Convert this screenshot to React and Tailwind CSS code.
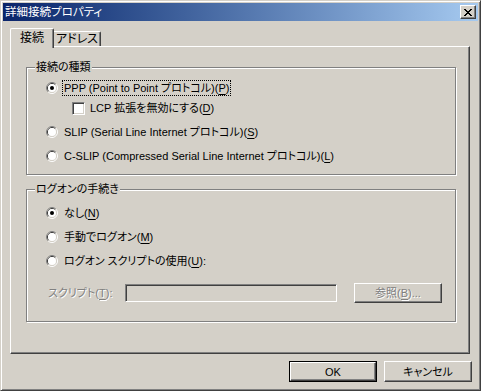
import React from "react";

const raised =
  "border border-t-white border-l-white border-r-[#404040] border-b-[#404040] shadow-[inset_-1px_-1px_#808080]";
const sunken =
  "border border-t-[#808080] border-l-[#808080] border-r-white border-b-white shadow-[inset_1px_1px_#404040,inset_-1px_-1px_#D4D0C8]";
const etched = "relative border border-[#808080] shadow-[inset_1px_1px_#fff,1px_1px_#fff]";
const disabledText = "text-[#808080] [text-shadow:1px_1px_0_#fff]";

function U({ children }) {
  return <span className="underline underline-offset-[2px]">{children}</span>;
}

function Radio({ checked }) {
  return (
    <svg width="12" height="12" viewBox="0 0 12 12" className="shrink-0">
      <path d="M2.11 9.89 A5.5 5.5 0 0 1 9.89 2.11" fill="none" stroke="#808080" />
      <path d="M9.89 2.11 A5.5 5.5 0 0 1 2.11 9.89" fill="none" stroke="#ffffff" />
      <path d="M2.82 9.18 A4.5 4.5 0 0 1 9.18 2.82" fill="none" stroke="#404040" />
      <path d="M9.18 2.82 A4.5 4.5 0 0 1 2.82 9.18" fill="none" stroke="#D4D0C8" />
      <circle cx="6" cy="6" r="4" fill="#ffffff" />
      {checked ? <circle cx="6" cy="6" r="2" fill="#000000" /> : null}
    </svg>
  );
}

function Legend({ children }) {
  return (
    <span className="absolute left-[8px] -top-[9px] bg-[#D4D0C8] px-[1px] leading-[16px]">{children}</span>
  );
}

function RadioRow({ checked, className = "", children }) {
  return (
    <div className={`flex h-[16px] items-center ${className}`}>
      <Radio checked={checked} />
      <span className="ml-[6px] whitespace-nowrap leading-[16px]">{children}</span>
    </div>
  );
}

function CloseGlyph() {
  const rows = ["XX....XX", ".XX..XX.", "..XXXX..", "...XX...", "..XXXX..", ".XX..XX.", "XX....XX"];
  return (
    <svg width="8" height="7" viewBox="0 0 8 7" shapeRendering="crispEdges">
      {rows.map((row, y) =>
        row.split("").map((c, x) => (c === "X" ? <rect key={`${x}-${y}`} x={x} y={y} width="1" height="1" fill="#000" /> : null))
      )}
    </svg>
  );
}

export default function App() {
  return (
    <div className="flex h-[391px] w-[481px] flex-col border border-t-[#D4D0C8] border-l-[#D4D0C8] border-r-[#404040] border-b-[#404040] bg-[#D4D0C8] p-[2px] font-['Liberation_Sans','Noto_Sans_CJK_JP',sans-serif] text-[11px] text-black shadow-[inset_1px_1px_#fff,inset_-1px_-1px_#808080] [font-feature-settings:'palt']">
      {/* title bar */}
      <div className="flex h-[18px] shrink-0 items-center justify-between bg-linear-to-r from-[#0A246A] to-[#A6CAF0] pl-[2px] pr-[2px]">
        <span className="text-[11.5px] leading-[16px] text-white">詳細接続プロパティ</span>
        <div className={`flex h-[14px] w-[16px] items-center justify-center bg-[#D4D0C8] ${raised}`}>
          <CloseGlyph />
        </div>
      </div>

      {/* tabs */}
      <div className="ml-[7px] mt-[7px] flex h-[18px] shrink-0 items-end">
        <div className="relative z-10 -mb-[2px] flex h-[20px] w-[44px] justify-center rounded-tl-[2px] rounded-tr-[2px] border-l border-t border-r border-l-white border-t-white border-r-[#404040] bg-[#D4D0C8] pt-[1px] shadow-[inset_-1px_0_#808080]">
          <span className="text-[12px] leading-[16px]">接続</span>
        </div>
        <div className="flex h-[15px] w-[47px] items-center justify-center rounded-tr-[2px] border-t border-r border-t-white border-r-[#404040] shadow-[inset_-1px_0_#808080]">
          <span className="text-[12px] leading-[14px]">アドレス</span>
        </div>
      </div>

      {/* tab panel */}
      <div className="ml-[7px] h-[308px] w-[460px] shrink-0 border border-t-white border-l-white border-r-[#404040] border-b-[#404040] pl-[15px] pt-[20px] shadow-[inset_-1px_-1px_#808080]">
        <div className={`${etched} h-[108px] w-[430px] pl-[19px] pt-[12px]`}>
          <Legend>接続の種類</Legend>
          <div className="flex h-[16px] items-center">
            <Radio checked />
            <span className="ml-[4px] flex h-[16px] items-center whitespace-nowrap border border-dotted border-black px-[1px] leading-[14px]">
              PPP (Point to Point プロトコル)(<U>P</U>)
            </span>
          </div>
          <div className="ml-[26px] mt-[4px] flex h-[16px] items-center">
            <span className={`h-[13px] w-[13px] shrink-0 bg-white ${sunken}`} />
            <span className="ml-[5px] whitespace-nowrap leading-[16px]">
              LCP 拡張を無効にする(<U>D</U>)
            </span>
          </div>
          <RadioRow className="mt-[8px]">
            SLIP (Serial Line Internet プロトコル)(<U>S</U>)
          </RadioRow>
          <RadioRow className="mt-[8px]">
            C-SLIP (Compressed Serial Line Internet プロトコル)(<U>L</U>)
          </RadioRow>
        </div>

        <div className={`${etched} mt-[14px] h-[133px] w-[430px] pl-[19px] pt-[15px]`}>
          <Legend>ログオンの手続き</Legend>
          <RadioRow checked>
            なし(<U>N</U>)
          </RadioRow>
          <RadioRow className="mt-[8px]">
            手動でログオン(<U>M</U>)
          </RadioRow>
          <RadioRow className="mt-[8px]">
            ログオン スクリプトの使用(<U>U</U>):
          </RadioRow>
          <div className="mt-[14px] flex h-[20px] items-center">
            <span className={`ml-[2px] w-[77px] whitespace-nowrap leading-[16px] ${disabledText}`}>
              スクリプト(<U>T</U>):
            </span>
            <div className={`h-[18px] w-[212px] bg-[#D4D0C8] ${sunken}`} />
            <div className={`ml-[17px] flex h-[20px] w-[88px] items-center justify-center ${raised}`}>
              <span className={`leading-[16px] ${disabledText}`}>
                参照(<U>B</U>)...
              </span>
            </div>
          </div>
        </div>
      </div>

      {/* dialog buttons */}
      <div className="mr-[6px] mt-[7px] flex justify-end gap-[7px]">
        <div className="h-[21px] w-[88px] border border-black">
          <div className={`flex h-full w-full items-center justify-center ${raised}`}>
            <span className="leading-[16px]">OK</span>
          </div>
        </div>
        <div className={`flex h-[21px] w-[88px] items-center justify-center ${raised}`}>
          <span className="leading-[16px]">キャンセル</span>
        </div>
      </div>
    </div>
  );
}
